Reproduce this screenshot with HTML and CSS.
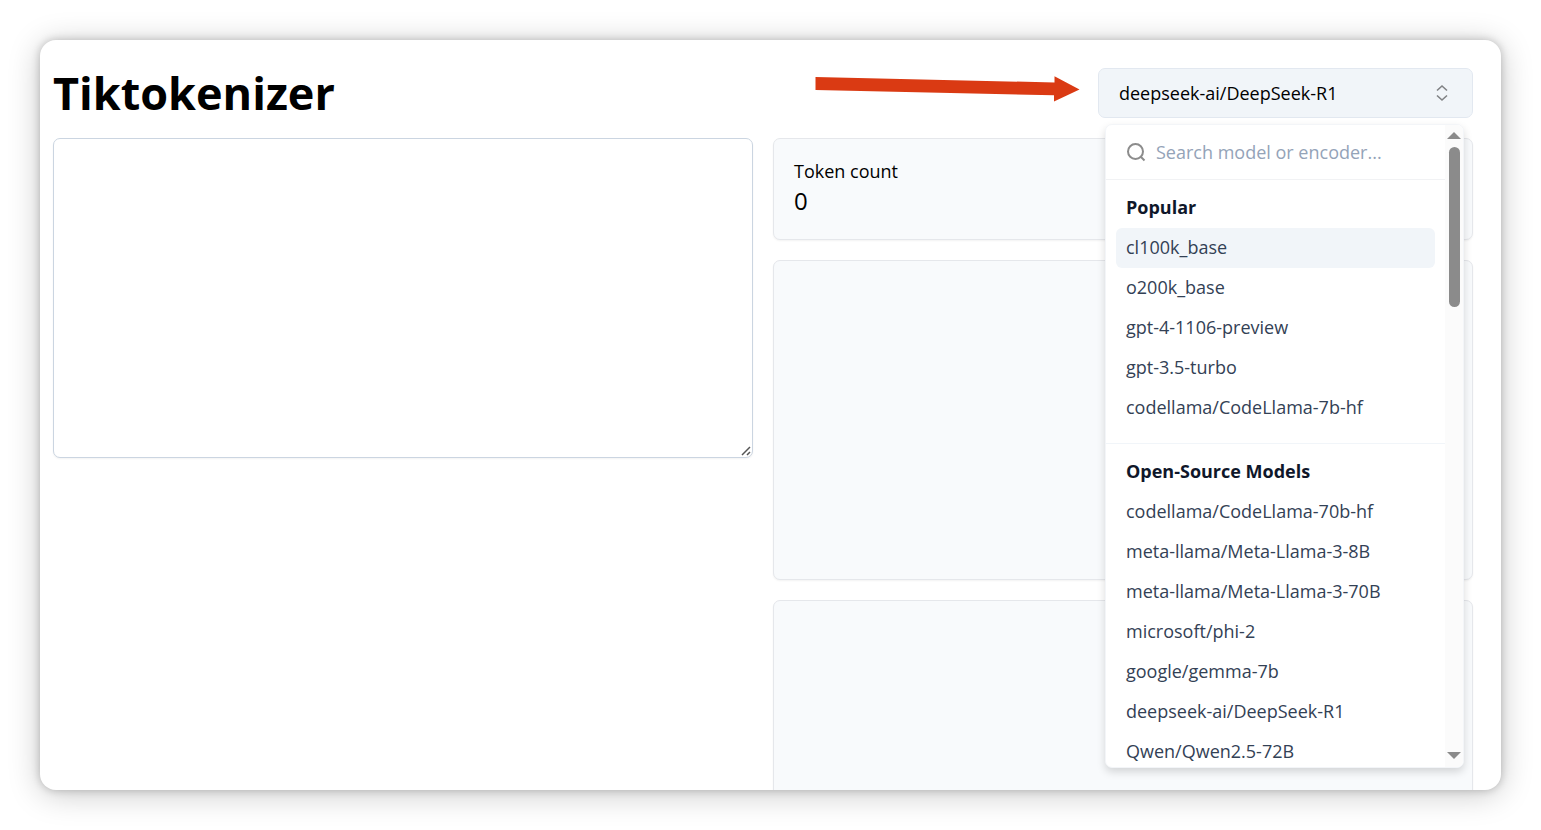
FILE: index.html
```html
<!DOCTYPE html>
<html lang="en">
<head>
    <meta charset="UTF-8">
    <meta name="viewport" content="width=device-width, initial-scale=1.0">
    <title>Tiktokenizer</title>
    <link rel="stylesheet" href="styles.css">
</head>
<body>
    <main class="window">
        <!-- Header -->
        <header class="header">
            <h1>Tiktokenizer</h1>

            <svg class="arrow" viewBox="0 0 265 28" aria-hidden="true">
                <path d="M0.5 2 L239.500 7.500 V1.200 L264.500 14.500 L239 26.500 V20.300 L0.500 15 Z" fill="#da3a13"/>
            </svg>

            <div class="picker">
                <button type="button" class="picker-button" aria-haspopup="listbox" aria-expanded="true">
                    <span>deepseek-ai/DeepSeek-R1</span>
                    <svg class="chevrons" viewBox="0 0 20 20" aria-hidden="true">
                        <path d="M5 7.500 L10 3 L15 7.500 M5 12.500 L10 17 L15 12.500"/>
                    </svg>
                </button>

                <!-- Model menu -->
                <div class="menu">
                    <div class="menu-content">
                        <div class="search">
                            <svg class="search-icon" viewBox="0 0 20 20" aria-hidden="true">
                                <circle cx="9.500" cy="9.500" r="7.500"/>
                                <path d="M15 15 L18.500 18.500"/>
                            </svg>
                            <input type="text" placeholder="Search model or encoder..." aria-label="Search model or encoder">
                        </div>
                        <div class="group">
                            <h2>Popular</h2>
                            <button type="button" class="item selected">cl100k_base</button>
                            <button type="button" class="item">o200k_base</button>
                            <button type="button" class="item">gpt-4-1106-preview</button>
                            <button type="button" class="item">gpt-3.5-turbo</button>
                            <button type="button" class="item">codellama/CodeLlama-7b-hf</button>
                        </div>
                        <div class="group">
                            <h2>Open-Source Models</h2>
                            <button type="button" class="item">codellama/CodeLlama-70b-hf</button>
                            <button type="button" class="item">meta-llama/Meta-Llama-3-8B</button>
                            <button type="button" class="item">meta-llama/Meta-Llama-3-70B</button>
                            <button type="button" class="item">microsoft/phi-2</button>
                            <button type="button" class="item">google/gemma-7b</button>
                            <button type="button" class="item">deepseek-ai/DeepSeek-R1</button>
                            <button type="button" class="item">Qwen/Qwen2.5-72B</button>
                        </div>
                    </div>
                    <div class="scrollbar" aria-hidden="true">
                        <svg class="scroll-arrow" viewBox="0 0 14 7"><path d="M7 0 L14 7 H0 Z"/></svg>
                        <div class="thumb"></div>
                        <svg class="scroll-arrow" viewBox="0 0 14 7"><path d="M0 0 H14 L7 7 Z"/></svg>
                    </div>
                </div>
            </div>
        </header>

        <!-- Editor and results -->
        <div class="columns">
            <div class="editor">
                <textarea aria-label="Text to tokenize"></textarea>
                <svg class="grip" viewBox="0 0 10 10" aria-hidden="true">
                    <path d="M1 9 L9 1 M6 9 L9 6"/>
                </svg>
            </div>

            <div class="results">
                <section class="card count">
                    <p class="count-label">Token count</p>
                    <p class="count-value">0</p>
                </section>
                <section class="card output"></section>
                <section class="card output"></section>
            </div>
        </div>
    </main>
</body>
</html>
```

FILE: styles.css
```css
* {
    box-sizing: border-box;
}

body {
    margin: 0;
    padding: 40px;
    height: 100vh;
    overflow: hidden;
    background-color: #fff;
    color: #000;
    font-family: "Segoe UI", "Open Sans", "Noto Sans", sans-serif;
    font-size: 18px;
    line-height: 24px;
}

h1, h2, p {
    margin: 0;
}

button, input, textarea {
    font: inherit;
    color: inherit;
}

.window {
    height: 100%;
    padding: 28px 28px 0 13px;
    overflow: hidden;
    background-color: #fff;
    border-radius: 16px;
    box-shadow: 0 0 8px rgba(0, 0, 0, 0.22), 0 4px 32px rgba(0, 0, 0, 0.22);
}

.header {
    display: flex;
    align-items: center;
    gap: 18px;
    height: 50px;
    margin-bottom: 20px;
}

h1 {
    font-size: 45px;
    line-height: 50px;
    font-weight: 700;
}

.arrow {
    width: 265px;
    height: 28px;
    margin-left: auto;
    margin-bottom: 8px;
}

/* Model picker */
.picker {
    position: relative;
    width: 375px;
}

.picker-button {
    display: flex;
    align-items: center;
    justify-content: space-between;
    width: 100%;
    height: 50px;
    padding: 0 20px;
    border: 1px solid #e2e8f0;
    border-radius: 7px;
    background-color: #f1f5f9;
    cursor: pointer;
}

.chevrons {
    width: 20px;
    height: 20px;
    fill: none;
    stroke: #808285;
    stroke-width: 1.6;
}

.menu {
    position: absolute;
    top: 56px;
    left: 7px;
    z-index: 1;
    display: flex;
    width: 359px;
    height: 644px;
    overflow: hidden;
    border: 1px solid #f3f5f8;
    border-radius: 7px;
    background-color: #fff;
    box-shadow: 0 4px 8px rgba(0, 0, 0, 0.15);
}

.menu-content {
    flex: 1;
    overflow: hidden;
}

.search {
    display: flex;
    align-items: center;
    gap: 10px;
    height: 55px;
    padding: 0 20px;
    border-bottom: 1px solid #f1f2f4;
}

.search-icon {
    flex: none;
    width: 20px;
    height: 20px;
    fill: none;
    stroke: #8c8c8c;
    stroke-width: 2;
}

.search input {
    flex: 1;
    min-width: 0;
    padding: 0;
    border: none;
    outline: none;
    background: none;
}

.search input::placeholder {
    color: #94a3b8;
    opacity: 1;
}

.group {
    padding: 8px 10px 15px;
    border-bottom: 1px solid #f1f5f9;
}

.group h2 {
    padding: 7px 10px 9px;
    font-size: 18px;
    line-height: 24px;
    font-weight: 700;
    color: #0f172a;
}

.item {
    display: block;
    width: 100%;
    height: 40px;
    padding: 0 10px 2px;
    border: none;
    border-radius: 6px;
    background: none;
    color: #334155;
    text-align: left;
    cursor: pointer;
}

.item.selected {
    background-color: #f1f5f9;
}

.scrollbar {
    display: flex;
    flex-direction: column;
    align-items: center;
    width: 18px;
    padding: 7px 0 8px;
    background-color: #fbfbfb;
}

.scroll-arrow {
    width: 14px;
    height: 7px;
    fill: #8b8b8b;
}

.thumb {
    width: 11px;
    height: 160px;
    margin: 8px 0 auto;
    border-radius: 6px;
    background-color: #8b8b8b;
}

/* Columns */
.columns {
    display: grid;
    grid-template-columns: 1fr 1fr;
    gap: 20px;
}

.editor {
    position: relative;
    height: 320px;
}

textarea {
    display: block;
    width: 100%;
    height: 100%;
    padding: 10px;
    border: 1px solid #cbd5e1;
    border-radius: 7px;
    background-color: #fff;
    box-shadow: 0 1px 2px rgba(0, 0, 0, 0.05);
    resize: none;
}

.grip {
    position: absolute;
    right: 2px;
    bottom: 2px;
    width: 10px;
    height: 10px;
    stroke: #555;
    stroke-width: 1.5;
}

.results {
    display: flex;
    flex-direction: column;
    gap: 20px;
}

.card {
    border: 1px solid #e5e7eb;
    border-radius: 7px;
    background-color: #f8fafc;
    box-shadow: 0 1px 2px rgba(0, 0, 0, 0.05);
}

.count {
    padding: 20px;
}

.count-value {
    font-size: 24px;
    line-height: 36px;
}

.output {
    height: 320px;
}
```
